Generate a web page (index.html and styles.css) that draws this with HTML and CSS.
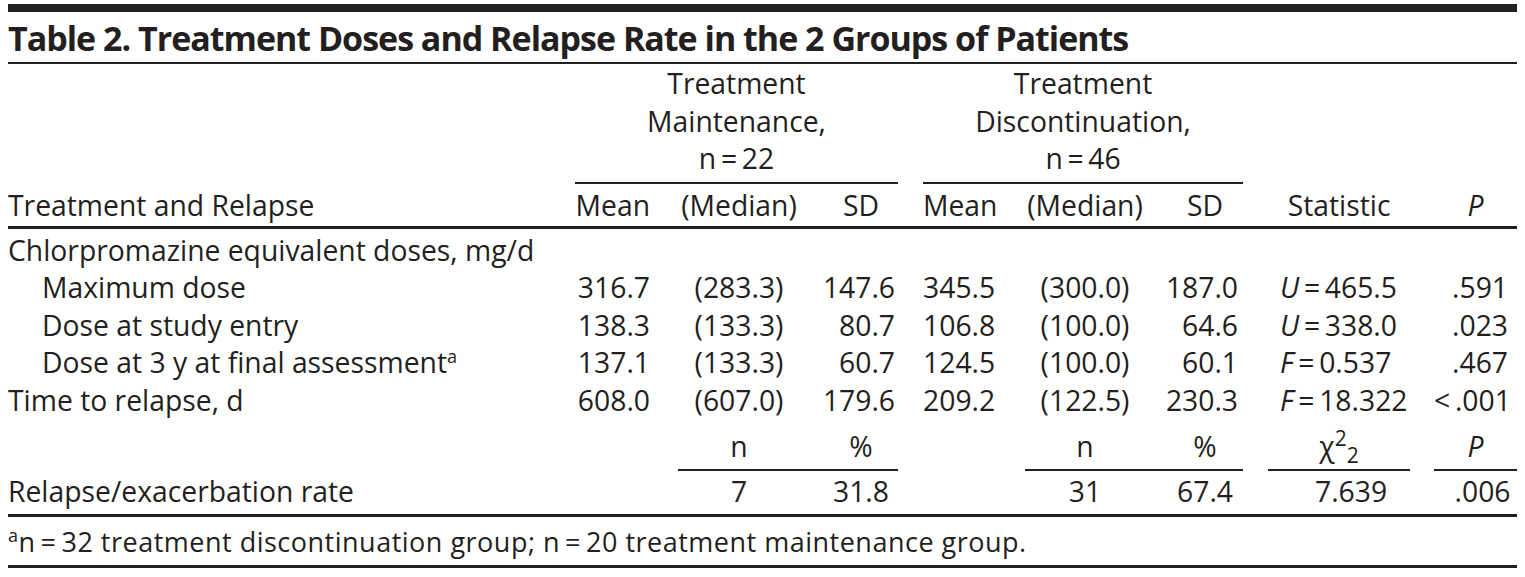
FILE: index.html
```html
<!DOCTYPE html>
<html lang="en">
<head>
<meta charset="utf-8">
<title>Table 2</title>
<link rel="stylesheet" href="styles.css">
</head>
<body>
<div class="page">
  <div class="topbar"></div>
  <div class="title">Table 2. Treatment Doses and Relapse Rate in the 2 Groups of Patients</div>
  <table class="tbl">
    <colgroup>
      <col class="w-lbl"><col class="w-mean1"><col class="w-med1"><col class="w-sd"><col class="w-gap">
      <col class="w-mean2"><col class="w-med2"><col class="w-sd"><col class="w-gap">
      <col class="w-stat"><col class="w-gap2"><col class="w-p">
    </colgroup>
    <thead>
      <tr class="r-group">
        <th></th>
        <th colspan="3" class="grp">Treatment<br>Maintenance,<br>n&#8201;=&#8201;22</th>
        <th></th>
        <th colspan="3" class="grp">Treatment<br>Discontinuation,<br>n&#8201;=&#8201;46</th>
        <th></th><th></th><th></th><th></th>
      </tr>
      <tr class="r-head">
        <th class="lbl">Treatment and Relapse</th>
        <th class="mean1">Mean</th>
        <th class="med">(Median)</th>
        <th class="sdc1">SD</th>
        <th></th>
        <th class="mean2">Mean</th>
        <th class="med">(Median)</th>
        <th class="sdc2">SD</th>
        <th></th>
        <th class="ctr">Statistic</th>
        <th></th>
        <th class="ctr"><i>P</i></th>
      </tr>
    </thead>
    <tbody>
      <tr class="r-first">
        <td class="lbl">Chlorpromazine equivalent doses, mg/d</td>
        <td></td><td></td><td></td><td></td><td></td><td></td><td></td><td></td><td></td><td></td><td></td>
      </tr>
      <tr>
        <td class="lbl sub">Maximum dose</td>
        <td class="mean1">316.7</td><td class="med">(283.3)</td><td class="sd1">147.6</td><td></td>
        <td class="mean2">345.5</td><td class="med">(300.0)</td><td class="sd2">187.0</td><td></td>
        <td class="stat"><i>U</i>&#8201;=&#8201;465.5</td><td></td><td class="pv">.591</td>
      </tr>
      <tr>
        <td class="lbl sub">Dose at study entry</td>
        <td class="mean1">138.3</td><td class="med">(133.3)</td><td class="sd1">80.7</td><td></td>
        <td class="mean2">106.8</td><td class="med">(100.0)</td><td class="sd2">64.6</td><td></td>
        <td class="stat"><i>U</i>&#8201;=&#8201;338.0</td><td></td><td class="pv">.023</td>
      </tr>
      <tr>
        <td class="lbl sub">Dose at 3 y at final assessment<sup class="fnm">a</sup></td>
        <td class="mean1">137.1</td><td class="med">(133.3)</td><td class="sd1">60.7</td><td></td>
        <td class="mean2">124.5</td><td class="med">(100.0)</td><td class="sd2">60.1</td><td></td>
        <td class="stat"><i>F</i>&#8201;=&#8201;0.537</td><td></td><td class="pv">.467</td>
      </tr>
      <tr>
        <td class="lbl">Time to relapse, d</td>
        <td class="mean1">608.0</td><td class="med">(607.0)</td><td class="sd1">179.6</td><td></td>
        <td class="mean2">209.2</td><td class="med">(122.5)</td><td class="sd2">230.3</td><td></td>
        <td class="stat"><i>F</i>&#8201;=&#8201;18.322</td><td></td><td class="pv">&lt;&#8201;.001</td>
      </tr>
      <tr class="r-sub">
        <td></td><td></td>
        <td class="med ul">n</td><td class="sdc1 ul">%</td><td></td>
        <td></td>
        <td class="med ul">n</td><td class="sdc2 ul">%</td><td></td>
        <td class="ctr ul">&#967;<sup class="chi-sup">2</sup><sub class="chi-sub">2</sub></td><td></td>
        <td class="ctr ul"><i>P</i></td>
      </tr>
      <tr class="r-last">
        <td class="lbl">Relapse/exacerbation rate</td>
        <td></td><td class="med">7</td><td class="sdc1">31.8</td><td></td>
        <td></td><td class="med">31</td><td class="sdc2">67.4</td><td></td>
        <td class="chi-v">7.639</td><td></td><td class="p-last">.006</td>
      </tr>
    </tbody>
  </table>
  <div class="foot"><sup class="fnm">a</sup>n&#8201;=&#8201;32 treatment discontinuation group; n&#8201;=&#8201;20 treatment maintenance group.</div>
</div>
</body>
</html>
```
FILE: styles.css
```css
html, body {
  margin: 0;
  padding: 0;
  background: #ffffff;
}

.page {
  padding: 4px 8px 0 8px;
  width: 1509px;
  color: #231f20;
  font-family: "Open Sans", "Noto Sans", sans-serif;
  font-size: 28.3px;
}

.topbar {
  height: 8px;
  background: #231f20;
}

.title {
  font-weight: 700;
  font-size: 34px;
  letter-spacing: -1px;
  line-height: 40px;
  padding: 6px 0 4px 0;
  border-bottom: 2px solid #231f20;
  white-space: nowrap;
}

.tbl {
  table-layout: fixed;
  width: 1509px;
  border-collapse: separate;
  border-spacing: 0;
}

.w-lbl { width: 567px; }
.w-mean1 { width: 103px; }
.w-med1 { width: 122px; }
.w-sd { width: 98px; }
.w-gap { width: 25px; }
.w-mean2 { width: 102px; }
.w-med2 { width: 120px; }
.w-stat { width: 142px; }
.w-gap2 { width: 24px; }
.w-p { width: 83px; }

.tbl th,
.tbl td {
  padding: 0;
  font-weight: 400;
  line-height: 37.5px;
  white-space: nowrap;
  vertical-align: top;
  text-align: left;
}

/* group header row */
.r-group th {
  padding-top: 1px;
  padding-bottom: 4px;
}
.r-group th.grp {
  text-align: center;
  border-bottom: 2px solid #231f20;
}

/* column header row */
.r-head th {
  padding-top: 3px;
  padding-bottom: 1.5px;
  border-bottom: 3px solid #231f20;
}

.r-first td { padding-top: 3px; }

.lbl { text-align: left; }
.tbl .sub { padding-left: 34px; }

.tbl .mean1 { text-align: right; padding-right: 28px; }
.tbl .mean2 { text-align: right; padding-right: 30px; }
.tbl .med { text-align: center; }
.tbl .sd1 { text-align: right; padding-right: 3px; }
.tbl .sd2 { text-align: right; padding-right: 5px; }
.tbl .sdc1 { text-align: center; padding-left: 24px; }
.tbl .sdc2 { text-align: center; padding-left: 22px; }
.tbl .ctr { text-align: center; }
.tbl .stat { text-align: left; padding-left: 12px; }
.tbl .pv { text-align: right; padding-right: 9px; }
.tbl .chi-v { text-align: center; padding-left: 24px; }
.tbl .p-last { text-align: center; padding-left: 14px; }

/* n / % sub-header row */
.r-sub td {
  padding-top: 9px;
  padding-bottom: 3.5px;
}
.r-sub td.ul {
  border-bottom: 2px solid #231f20;
}
.r-sub td.sdc1 { padding-left: 24px; }
.r-sub td.sdc2 { padding-left: 22px; }

.r-last td {
  padding-top: 2px;
  padding-bottom: 3.5px;
  border-bottom: 3px solid #231f20;
}

.fnm {
  font-size: 18px;
  line-height: 0;
  vertical-align: 10px;
}

.chi-sup {
  font-size: 21px;
  line-height: 0;
  vertical-align: 11px;
}
.chi-sub {
  font-size: 21px;
  line-height: 0;
  vertical-align: -6px;
}

.foot {
  font-size: 27px;
  letter-spacing: 0.5px;
  line-height: 30px;
  padding-top: 10px;
  padding-bottom: 8px;
  border-bottom: 3px solid #231f20;
  white-space: nowrap;
}
```
